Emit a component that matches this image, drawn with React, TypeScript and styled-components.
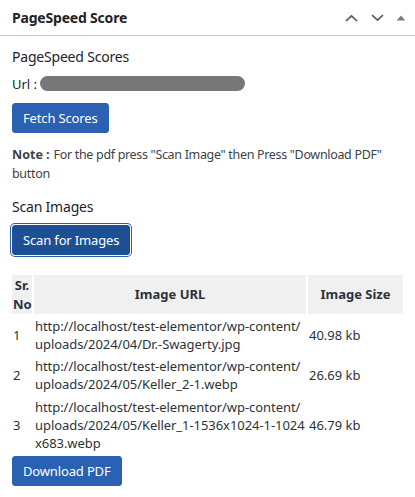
import React from "react";
import styled, { createGlobalStyle, css } from "styled-components";

const GlobalStyle = createGlobalStyle`
  html, body {
    margin: 0;
    padding: 0;
    background: #ffffff;
  }
  body {
    font-family: "Noto Sans", "Open Sans", sans-serif;
    font-size: 13px;
    line-height: 1.4;
    color: #3c434a;
  }
`;

const Panel = styled.section`
  width: 415px;
  background: #fff;
`;

const PanelHeader = styled.header`
  height: 35px;
  border-bottom: 1px solid #c3c4c7;
  display: flex;
  align-items: center;
  justify-content: space-between;
  padding: 0 3px 0 12px;
`;

const Title = styled.h2`
  margin: 0;
  font-size: 14px;
  font-weight: 700;
  color: #1d2327;
  line-height: 1.4;
  letter-spacing: -0.2px;
`;

const Controls = styled.div`
  display: flex;
  align-items: center;
`;

const IconButton = styled.button<{ $w: number }>`
  width: ${(p) => p.$w}px;
  height: 36px;
  padding: 0;
  border: 0;
  background: transparent;
  display: flex;
  align-items: center;
  justify-content: center;
  color: #50575e;
  cursor: pointer;
`;

const PanelBody = styled.div`
  display: flex;
  flex-direction: column;
  align-items: flex-start;
  padding: 11px 12px 12px;
`;

const SectionTitle = styled.h3<{ $mt?: number }>`
  margin: ${(p) => p.$mt ?? 0}px 0 0;
  font-size: 14px;
  font-weight: 400;
  line-height: 1.4;
  color: #1d2327;
  letter-spacing: -0.2px;
`;

const UrlRow = styled.p`
  margin: 8px 0 0;
  display: flex;
  align-items: center;
  color: #1d2327;
`;

const Redacted = styled.span`
  display: inline-block;
  width: 205px;
  height: 15px;
  margin-left: 3px;
  border-radius: 8px;
  background: #777777;
`;

const Button = styled.button<{ $mt: number; $focused?: boolean }>`
  margin-top: ${(p) => p.$mt}px;
  height: 30px;
  padding: 0 10px;
  border: 1px solid #2a61b3;
  border-radius: 3px;
  background: #2a61b3;
  color: #ffffff;
  font-family: inherit;
  font-size: 13px;
  line-height: 28px;
  letter-spacing: -0.15px;
  cursor: pointer;
  ${(p) =>
    p.$focused &&
    css`
      background: #1c4f94;
      border-color: #1c4f94;
      box-shadow: 0 0 0 1px #ffffff, 0 0 0 2px #2a61b3;
    `}
`;

const Note = styled.p`
  margin: 12px 0 0;
  font-size: 12.5px;
  line-height: 19.5px;
  letter-spacing: -0.32px;
  color: #3c434a;
`;

const NoteLabel = styled.strong`
  font-weight: 700;
  letter-spacing: 0;
  padding-right: 1px;
`;

const ImageTable = styled.table`
  align-self: stretch;
  margin-top: 18px;
  border-spacing: 2px;
  margin-left: -2px;
  margin-right: -2px;
  width: calc(100% + 4px);
  table-layout: fixed;
  color: #2c3338;
`;

const HeadCell = styled.th`
  background: #f0f0f0;
  padding: 1px;
  font-weight: 700;
  text-align: center;
  vertical-align: middle;
  line-height: 18.2px;
`;

const Cell = styled.td<{ $url?: boolean }>`
  padding: 1px;
  vertical-align: middle;
  line-height: 18.2px;
  ${(p) =>
    p.$url &&
    css`
      word-break: break-all;
      letter-spacing: -0.06px;
    `}
`;

const Chevron = ({ dir }: { dir: "up" | "down" }) => (
  <svg width="13" height="8" viewBox="0 0 13 8" fill="none">
    <path
      d={dir === "up" ? "M1 7L6.5 1.8L12 7" : "M1 1L6.5 6.2L12 1"}
      stroke="currentColor"
      strokeWidth="1.7"
    />
  </svg>
);

const Triangle = () => (
  <svg width="10" height="6" viewBox="0 0 10 6">
    <path d="M5 0.5L9.3 5.5H0.7Z" fill="#787c82" />
  </svg>
);

const rows = [
  {
    n: 1,
    url: "http://localhost/test-elementor/wp-content/uploads/2024/04/Dr.-Swagerty.jpg",
    size: "40.98 kb",
  },
  {
    n: 2,
    url: "http://localhost/test-elementor/wp-content/uploads/2024/05/Keller_2-1.webp",
    size: "26.69 kb",
  },
  {
    n: 3,
    url: "http://localhost/test-elementor/wp-content/uploads/2024/05/Keller_1-1536x1024-1-1024x683.webp",
    size: "46.79 kb",
  },
];

export default function App() {
  return (
    <>
      <GlobalStyle />
      <Panel>
        <PanelHeader>
          <Title>PageSpeed Score</Title>
          <Controls>
            <IconButton $w={26} aria-label="Move up">
              <Chevron dir="up" />
            </IconButton>
            <IconButton $w={26} aria-label="Move down">
              <Chevron dir="down" />
            </IconButton>
            <IconButton $w={22} aria-label="Toggle panel">
              <Triangle />
            </IconButton>
          </Controls>
        </PanelHeader>
        <PanelBody>
          <SectionTitle>PageSpeed Scores</SectionTitle>
          <UrlRow>
            Url :<Redacted />
          </UrlRow>
          <Button $mt={10}>Fetch Scores</Button>
          <Note>
            <NoteLabel>Note :</NoteLabel> For the pdf press "Scan Image" then
            Press "Download PDF" button
          </Note>
          <SectionTitle $mt={13}>Scan Images</SectionTitle>
          <Button $mt={9} $focused>
            Scan for Images
          </Button>
          <ImageTable>
            <colgroup>
              <col style={{ width: 20 }} />
              <col />
              <col style={{ width: 95 }} />
            </colgroup>
            <thead>
              <tr>
                <HeadCell>Sr. No</HeadCell>
                <HeadCell>Image URL</HeadCell>
                <HeadCell>Image Size</HeadCell>
              </tr>
            </thead>
            <tbody>
              {rows.map((r) => (
                <tr key={r.n}>
                  <Cell>{r.n}</Cell>
                  <Cell $url>{r.url}</Cell>
                  <Cell>{r.size}</Cell>
                </tr>
              ))}
            </tbody>
          </ImageTable>
          <Button $mt={1}>Download PDF</Button>
        </PanelBody>
      </Panel>
    </>
  );
}
